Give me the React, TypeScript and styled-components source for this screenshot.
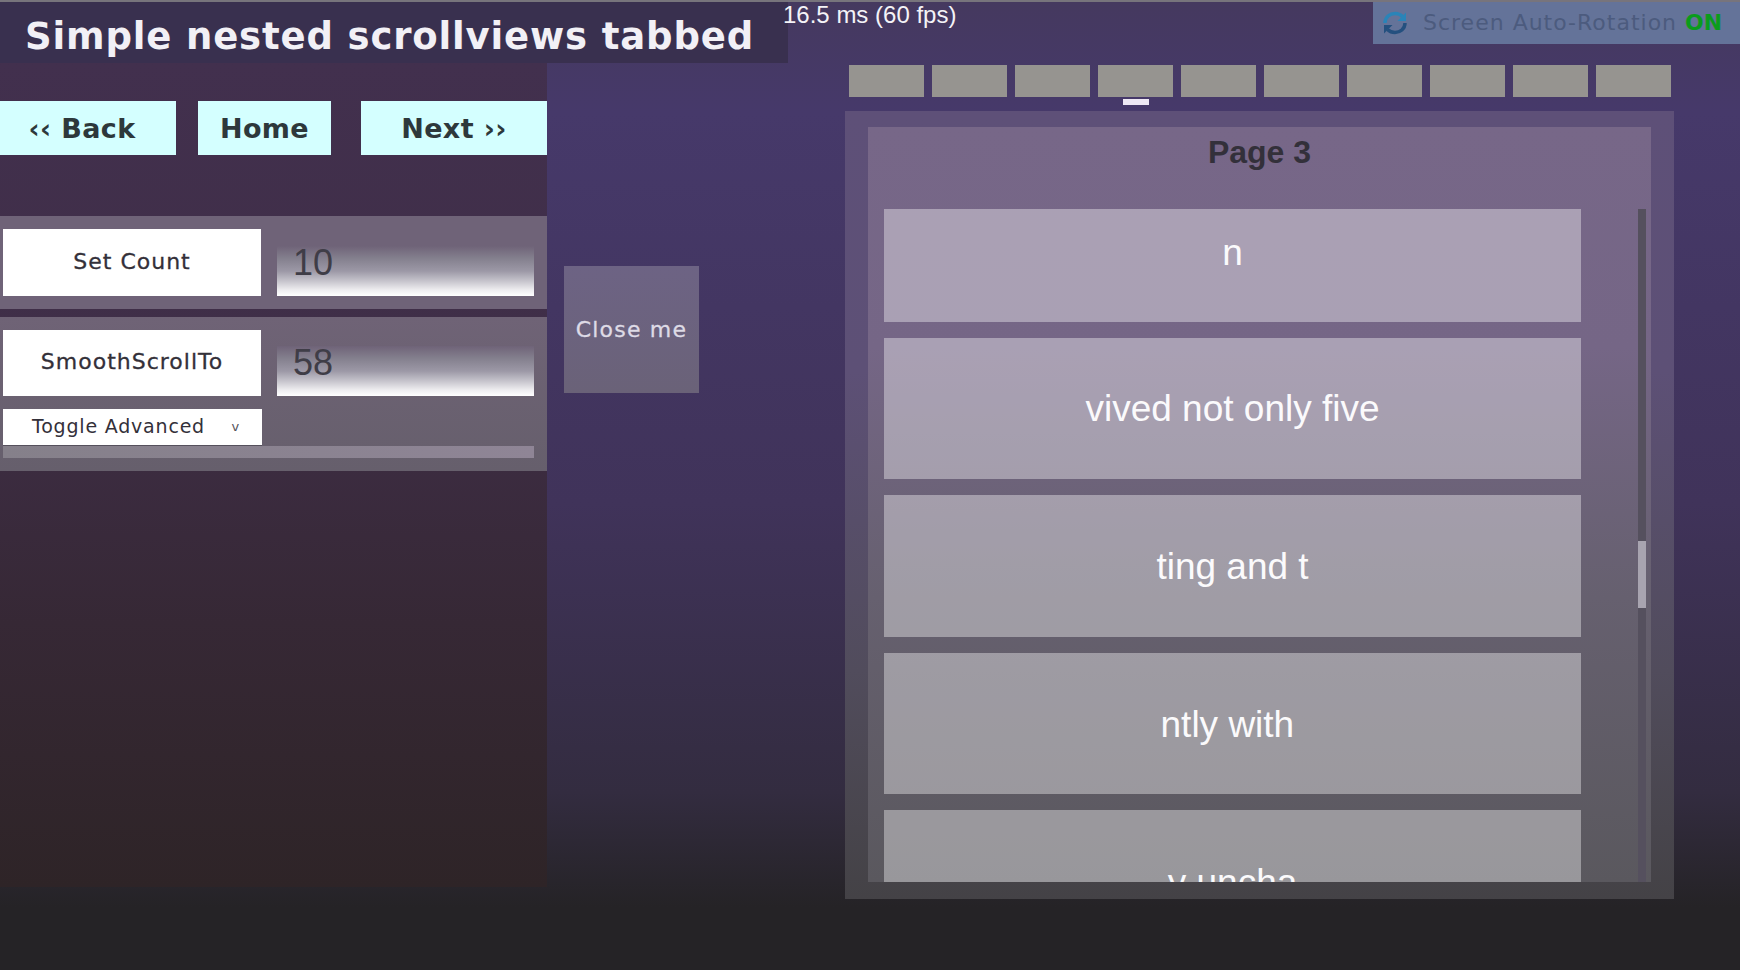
import styled, { createGlobalStyle } from "styled-components";

const GlobalStyle = createGlobalStyle`
  html, body {
    margin: 0;
    padding: 0;
    background: #252326;
  }
  * {
    box-sizing: border-box;
  }
`;

const displayFont = `"DejaVu Sans", sans-serif`;
const plainFont = `"Liberation Sans", Arial, sans-serif`;

const Screen = styled.div`
  width: 1740px;
  height: 970px;
  overflow: hidden;
  display: grid;
  grid-template-columns: 788px 952px;
  border-top: 2px solid #77747c;
  background: linear-gradient(
    180deg,
    #45395f 0,
    #46396a 110px,
    #40335a 500px,
    #332c40 790px,
    #252326 905px
  );
  font-family: ${plainFont};
`;

const LeftColumn = styled.div`
  display: flex;
  flex-direction: column;
`;

const TitleBar = styled.h1`
  margin: 0;
  height: 61px;
  padding: 16px 0 0 25px;
  background: #39304f;
  color: #f2f0f6;
  font: 700 37px/1 ${displayFont};
  letter-spacing: 0.85px;
  white-space: nowrap;
`;

const LeftBody = styled.div`
  display: flex;
`;

const SidePanel = styled.div`
  width: 547px;
  height: 824px;
  padding-top: 38px;
  background: linear-gradient(180deg, #42304e 0, #3f2e47 300px, #362835 560px, #2e2427 824px);
`;

const NavRow = styled.nav`
  display: flex;
  margin-bottom: 61px;
`;

const NavButton = styled.button<{ $width: number; $gap?: number; $shift?: number }>`
  width: ${(p) => p.$width}px;
  height: 54px;
  margin-left: ${(p) => p.$gap ?? 0}px;
  border: 0;
  padding: 0 ${(p) => p.$shift ?? 0}px 0 0;
  background: #d4ffff;
  color: #2d383b;
  font: 700 27px/1 ${displayFont};
  letter-spacing: 0.4px;
`;

const ControlGroup = styled.section`
  margin-bottom: 8px;
  padding: 13px 13px 13px 3px;
  background: #6f6378;
  &:last-child {
    margin-bottom: 0;
    background: linear-gradient(180deg, #6f6376, #665f6c);
  }
`;

const ControlRow = styled.div<{ $height: number }>`
  display: grid;
  grid-template-columns: 258px 257px;
  gap: 16px;
  height: ${(p) => p.$height}px;
`;

const ActionButton = styled.button`
  border: 0;
  padding: 0 0 2px;
  background: #fff;
  color: #333039;
  font: 400 22px/1 ${displayFont};
  letter-spacing: 1px;
  -webkit-text-stroke: 0.3px #333039;
`;

const NumberField = styled.div`
  align-self: end;
  height: 50px;
  padding-left: 16px;
  background: linear-gradient(
    180deg,
    #6f6378 0,
    #84808e 25%,
    #9c98a6 50%,
    #c6c4cc 70%,
    #eeedf0 88%,
    #fff 100%
  );
  color: #3f3d47;
  font-size: 36px;
  line-height: 34px;
`;

const ToggleButton = styled.button`
  display: flex;
  justify-content: space-between;
  align-items: center;
  width: 259px;
  height: 36px;
  margin-top: 13px;
  border: 0;
  padding: 0 22px 1px 29px;
  background: #fff;
  box-shadow: 0 1px 0 #55505c;
  color: #333039;
  font: 400 19px/1 ${displayFont};
  letter-spacing: 0.8px;
  small {
    font: 400 13px/1 ${displayFont};
    color: #55525c;
  }
`;

const SliderTrack = styled.div`
  width: 531px;
  height: 12px;
  margin-top: 1px;
  background: linear-gradient(90deg, #85808a, #8f8596);
`;

const CloseSlot = styled.div`
  padding: 203px 0 0 17px;
`;

const CloseButton = styled.button`
  width: 135px;
  height: 127px;
  border: 0;
  padding: 0;
  background: linear-gradient(180deg, #6d6384, #6a6278);
  color: #dedbe6;
  font: 400 22px/1 ${displayFont};
  letter-spacing: 1.2px;
  -webkit-text-stroke: 0.3px #dedbe6;
`;

const RightColumn = styled.div`
  display: flex;
  flex-direction: column;
`;

const StatusRow = styled.div`
  display: flex;
  justify-content: space-between;
  align-items: flex-start;
  height: 63px;
`;

const FpsLabel = styled.span`
  margin: -2px 0 0 -5px;
  color: #f4f3f7;
  font-size: 24px;
  line-height: 30px;
  white-space: nowrap;
`;

const RotationBanner = styled.div`
  display: flex;
  align-items: center;
  gap: 15px;
  width: 367px;
  height: 42px;
  padding-left: 9px;
  background: #647399;
  color: #4c5b7e;
  font: 400 22px/1 ${displayFont};
  letter-spacing: 1px;
  white-space: nowrap;
  b {
    color: #0a9c1c;
    font-weight: 700;
    letter-spacing: 0;
  }
`;

const TabStrip = styled.div`
  display: flex;
  gap: 8px;
  margin-left: 61px;
`;

const TabBox = styled.div<{ $active?: boolean }>`
  position: relative;
  width: 75px;
  height: 32px;
  background: #969490;
  &::after {
    content: "";
    display: ${(p) => (p.$active ? "block" : "none")};
    position: absolute;
    left: 25px;
    top: 34px;
    width: 26px;
    height: 6px;
    background: #eee8f4;
  }
`;

const Frame = styled.div`
  width: 829px;
  height: 788px;
  margin: 14px 0 0 57px;
  padding: 16px 23px 17px;
  background: linear-gradient(180deg, #5e5078 0, #5d5076 260px, #514c5c 560px, #444246 788px);
`;

const Inner = styled.div`
  height: 755px;
  display: flex;
  flex-direction: column;
  background: linear-gradient(180deg, #776788 0, #756686 220px, #66606f 470px, #5a585e 755px);
`;

const PageTitle = styled.h2`
  margin: 0;
  height: 82px;
  padding: 7px 0 0 0;
  text-align: center;
  color: #33303a;
  font: 700 32px/36px ${plainFont};
`;

const ScrollArea = styled.div`
  flex: 1;
  min-height: 0;
  display: flex;
  justify-content: space-between;
  overflow: hidden;
  padding-left: 16px;
`;

const ItemList = styled.div`
  width: 697px;
  display: flex;
  flex-direction: column;
  gap: 16px;
`;

const Item = styled.div<{ $height: number; $pad: number }>`
  flex: none;
  height: ${(p) => p.$height}px;
  padding-top: ${(p) => p.$pad}px;
  background: rgba(255, 255, 255, 0.38);
  color: #fbfafc;
  text-align: center;
  font-size: 37px;
  line-height: 42px;
  white-space: pre;
`;

const ScrollTrack = styled.div`
  position: relative;
  width: 8px;
  margin-right: 5px;
  background: #55505e;
`;

const ScrollThumb = styled.div`
  position: absolute;
  left: 0;
  top: 332px;
  width: 8px;
  height: 67px;
  background: #a8a4b0;
`;

const SyncIcon = () => (
  <svg width="26" height="24" viewBox="0 0 26 24" fill="none">
    <path d="M3 12C3 6 8 2.5 13 2.5c3 0 5.5 1 7.500 3" stroke="#2a84b8" strokeWidth="3.500" />
    <path d="M24 1.500v8.500h-8.500z" fill="#2a84b8" />
    <path d="M23 12c0 6-5 9.500-10 9.500-3 0-5.500-1-7.500-3" stroke="#24507f" strokeWidth="3.500" />
    <path d="M2 22.500v-8.500h8.500z" fill="#24507f" />
  </svg>
);

const items = [
  { text: "n", height: 113, pad: 23 },
  { text: "vived not only five", height: 141, pad: 50 },
  { text: "ting and t", height: 142, pad: 51 },
  { text: "ntly with ", height: 141, pad: 51 },
  { text: "y uncha", height: 141, pad: 52 },
];

export default function App() {
  return (
    <>
      <GlobalStyle />
      <Screen>
        <LeftColumn>
          <TitleBar>Simple nested scrollviews tabbed</TitleBar>
          <LeftBody>
            <SidePanel>
              <NavRow>
                <NavButton $width={176} $shift={12}>‹‹ Back</NavButton>
                <NavButton $width={133} $gap={22}>Home</NavButton>
                <NavButton $width={186} $gap={30}>Next ››</NavButton>
              </NavRow>
              <ControlGroup>
                <ControlRow $height={67}>
                  <ActionButton>Set Count</ActionButton>
                  <NumberField>10</NumberField>
                </ControlRow>
              </ControlGroup>
              <ControlGroup>
                <ControlRow $height={66}>
                  <ActionButton>SmoothScrollTo</ActionButton>
                  <NumberField>58</NumberField>
                </ControlRow>
                <ToggleButton>
                  Toggle Advanced <small>v</small>
                </ToggleButton>
                <SliderTrack />
              </ControlGroup>
            </SidePanel>
            <CloseSlot>
              <CloseButton>Close me</CloseButton>
            </CloseSlot>
          </LeftBody>
        </LeftColumn>
        <RightColumn>
          <StatusRow>
            <FpsLabel>16.5 ms (60 fps)</FpsLabel>
            <RotationBanner>
              <SyncIcon />
              <span>
                Screen Auto-Rotation <b>ON</b>
              </span>
            </RotationBanner>
          </StatusRow>
          <TabStrip>
            {Array.from({ length: 10 }, (_, i) => (
              <TabBox key={i} $active={i === 3} />
            ))}
          </TabStrip>
          <Frame>
            <Inner>
              <PageTitle>Page 3</PageTitle>
              <ScrollArea>
                <ItemList>
                  {items.map((item) => (
                    <Item key={item.text} $height={item.height} $pad={item.pad}>
                      {item.text}
                    </Item>
                  ))}
                </ItemList>
                <ScrollTrack>
                  <ScrollThumb />
                </ScrollTrack>
              </ScrollArea>
            </Inner>
          </Frame>
        </RightColumn>
      </Screen>
    </>
  );
}
